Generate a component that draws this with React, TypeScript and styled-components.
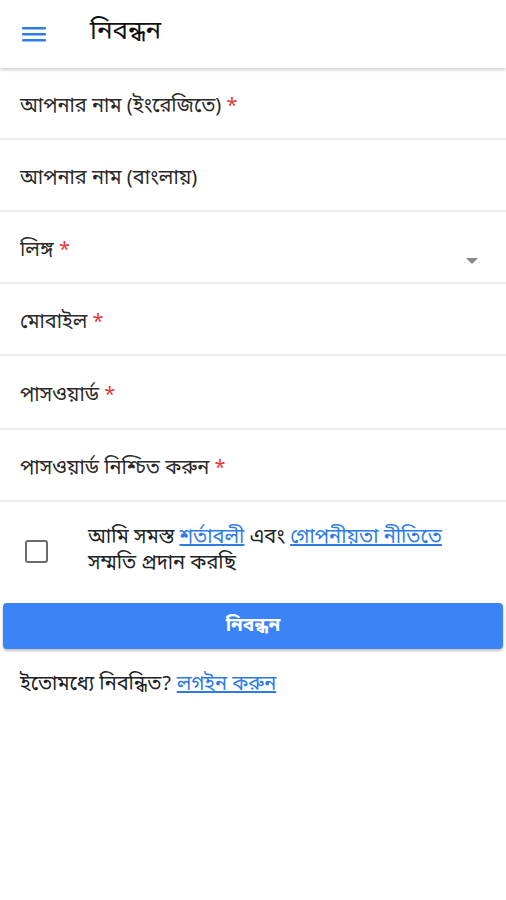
import { FC } from "react";
import styled, { createGlobalStyle } from "styled-components";

const GlobalStyle = createGlobalStyle`
  html, body {
    margin: 0;
    padding: 0;
    background: #ffffff;
  }
  body {
    font-family: "Noto Sans Bengali", "Noto Sans", "Liberation Sans", sans-serif;
    color: #222222;
  }
`;

const fields = [
  { label: "আপনার নাম (ইংরেজিতে)", required: true, height: 72 },
  { label: "আপনার নাম (বাংলায়)", required: false, height: 72 },
  { label: "লিঙ্গ", required: true, height: 72, select: true },
  { label: "মোবাইল", required: true, height: 72 },
  { label: "পাসওয়ার্ড", required: true, height: 74 },
  { label: "পাসওয়ার্ড নিশ্চিত করুন", required: true, height: 72 },
];

const App: FC = () => (
  <>
    <GlobalStyle />
    <Page>
      <Header>
        <MenuButton aria-label="menu">
          <svg width="24" height="16" viewBox="0 0 24 16">
            <rect x="0" y="1" width="24" height="2.4" rx="1" fill="#2f7be6" />
            <rect x="0" y="7" width="24" height="2.4" rx="1" fill="#2f7be6" />
            <rect x="0" y="13" width="24" height="2.4" rx="1" fill="#2f7be6" />
          </svg>
        </MenuButton>
        <Title>নিবন্ধন</Title>
      </Header>

      <Form>
        {fields.map((f) => (
          <FieldRow key={f.label} $height={f.height}>
            <Label>
              {f.label}
              {f.required && <Star> *</Star>}
            </Label>
            {f.select && <Caret />}
          </FieldRow>
        ))}

        <TermsRow>
          <Checkbox />
          <TermsText>
            আমি সমস্ত <Link>শর্তাবলী</Link> এবং <Link>গোপনীয়তা নীতিতে</Link>
            <br />
            সম্মতি প্রদান করছি
          </TermsText>
        </TermsRow>

        <SubmitButton>নিবন্ধন</SubmitButton>

        <Footer>
          ইতোমধ্যে নিবন্ধিত? <Link>লগইন করুন</Link>
        </Footer>
      </Form>
    </Page>
  </>
);

export default App;

const Page = styled.div`
  width: 506px;
  min-height: 900px;
  background: #ffffff;
`;

const Header = styled.header`
  height: 68px;
  display: flex;
  align-items: center;
  box-shadow: 0 2px 3px rgba(0, 0, 0, 0.18);
  position: relative;
  z-index: 1;
`;

const MenuButton = styled.button`
  background: none;
  border: none;
  padding: 0;
  margin-left: 22px;
  width: 24px;
  height: 16px;
  display: flex;
  cursor: pointer;
`;

const Title = styled.h1`
  margin: -4px 0 0 44px;
  font-size: 26px;
  font-weight: 400;
  color: #111111;
`;

const Form = styled.div`
  display: flex;
  flex-direction: column;
`;

const FieldRow = styled.div<{ $height: number }>`
  height: ${(p) => p.$height}px;
  border-bottom: 2px solid #ececec;
  box-sizing: border-box;
  display: flex;
  align-items: center;
  padding: 0 20px;
  position: relative;
`;

const Label = styled.span`
  font-size: 20px;
  color: #2a2a2a;
  margin-top: 8px;
`;

const Star = styled.span`
  color: #e53935;
`;

const Caret = styled.span`
  position: absolute;
  right: 28px;
  top: 46px;
  width: 0;
  height: 0;
  border-left: 6px solid transparent;
  border-right: 6px solid transparent;
  border-top: 6px solid #8a8a8a;
`;

const TermsRow = styled.div`
  display: flex;
  align-items: center;
  padding: 23px 0 20px 25px;
`;

const Checkbox = styled.span`
  width: 19px;
  height: 19px;
  border: 2px solid #6b6b6b;
  border-radius: 3px;
  flex-shrink: 0;
`;

const TermsText = styled.p`
  margin: 0 0 0 40px;
  font-size: 20px;
  line-height: 26px;
  color: #222222;
`;

const Link = styled.a`
  color: #2f7be6;
  text-decoration: underline;
  cursor: pointer;
`;

const SubmitButton = styled.button`
  margin: 6px 3px 0;
  height: 46px;
  background: #3b84f7;
  border: none;
  border-radius: 4px;
  box-shadow: 0 2px 3px rgba(0, 0, 0, 0.25);
  color: #ffffff;
  font-family: inherit;
  font-size: 19px;
  font-weight: 700;
  cursor: pointer;
`;

const Footer = styled.p`
  margin: 23px 0 0 20px;
  font-size: 20px;
  color: #222222;
`;
